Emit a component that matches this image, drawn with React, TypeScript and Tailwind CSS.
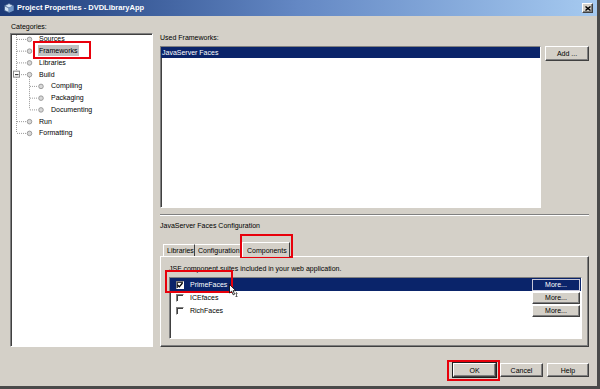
import type { ReactNode } from "react";

const raised =
  "border border-t-white border-l-white border-r-[#404040] border-b-[#404040] shadow-[inset_-1px_-1px_0_#808080]";
const sunken =
  "border border-t-[#808080] border-l-[#808080] border-r-white border-b-white shadow-[inset_1px_1px_0_#404040]";

function Button({ children, className = "" }: { children: ReactNode; className?: string }) {
  return (
    <div className={`flex h-[14px] items-center justify-center bg-[#d4d0c8] ${raised} ${className}`}>
      {children}
    </div>
  );
}

function Mark({ className }: { className: string }) {
  return <div className={`pointer-events-none absolute border-2 border-[#e8000b] ${className}`} />;
}

const tree = [
  { label: "Sources", sub: false },
  { label: "Frameworks", sub: false, active: true },
  { label: "Libraries", sub: false },
  { label: "Build", sub: false },
  { label: "Compiling", sub: true },
  { label: "Packaging", sub: true },
  { label: "Documenting", sub: true },
  { label: "Run", sub: false },
  { label: "Formatting", sub: false },
];

const ROW = 11.75;
const cy = (i: number) => 4.9 + i * ROW;

function TreeLines() {
  return (
    <svg className="absolute left-0 top-0" width="40" height="110" viewBox="0 0 40 110">
      <g stroke="#9a9a9a" strokeWidth="1" strokeDasharray="1 1" fill="none">
        <line x1="5.5" y1="1" x2="5.5" y2={cy(8)} />
        {[0, 1, 2, 3, 7, 8].map((i) => (
          <line key={i} x1="6" y1={cy(i) + 0.5} x2="15" y2={cy(i) + 0.5} />
        ))}
        <line x1="18.5" y1={cy(3) + 3} x2="18.5" y2={cy(6)} />
        {[4, 5, 6].map((i) => (
          <line key={i} x1="19" y1={cy(i) + 0.5} x2="27" y2={cy(i) + 0.5} />
        ))}
      </g>
      <rect x="2.5" y={cy(3) - 3} width="6" height="6" fill="#fff" stroke="#8a8a8a" />
      <line x1="4" y1={cy(3) + 0.5} x2="7.5" y2={cy(3) + 0.5} stroke="#202020" />
      {tree.map((t, i) => (
        <circle
          key={t.label}
          cx={t.sub ? 30 : 18.5}
          cy={cy(i) + 0.5}
          r="2.3"
          fill="#d8d8d8"
          stroke="#8c8c8c"
          strokeWidth="0.8"
        />
      ))}
    </svg>
  );
}

function Check({ checked }: { checked?: boolean }) {
  return (
    <div className={`flex h-[8px] w-[8px] items-center justify-center bg-white ${sunken}`}>
      {checked && (
        <svg width="6" height="6" viewBox="0 0 6 6">
          <path d="M0.5 3 L2.3 4.8 L5.5 1" stroke="#000" strokeWidth="1.3" fill="none" />
        </svg>
      )}
    </div>
  );
}

const suites = [
  { name: "PrimeFaces", on: true },
  { name: "ICEfaces", on: false },
  { name: "RichFaces", on: false },
];

export default function App() {
  return (
    <div className="relative flex h-[389px] w-[600px] flex-col border-b-[3px] border-r-[3px] border-[#4a4a4a] bg-[#d4d0c8] font-['Liberation_Sans',Arial,sans-serif] text-[7px] leading-none text-black">
      {/* title bar */}
      <div className="flex h-[16px] shrink-0 items-center bg-linear-to-r from-[#1c3a78] via-[#6488c4] to-[#a6caf0] pl-[4px] pr-[3px]">
        <svg width="10" height="10" viewBox="0 0 10 10">
          <path d="M5 0.5 L9.5 2.8 L9.5 7.5 L5 9.5 L0.5 7.5 L0.5 2.8 Z" fill="#cfe0f5" stroke="#3b5a8a" strokeWidth="0.8" />
          <path d="M0.5 2.8 L5 5 L9.5 2.8 M5 5 L5 9.5" stroke="#3b5a8a" strokeWidth="0.8" fill="none" />
          <path d="M5 5 L9.5 2.8 L9.5 7.5 L5 9.5 Z" fill="#6f95c8" />
        </svg>
        <span className="ml-[3px] text-[7.5px] font-bold text-white">Project Properties - DVDLibraryApp</span>
        <div className={`ml-auto mr-[1px] flex h-[10px] w-[11px] items-center justify-center bg-[#d4d0c8] ${raised}`}>
          <svg width="6" height="5" viewBox="0 0 6 5">
            <path d="M0.5 0.5 L5.5 4.5 M5.5 0.5 L0.5 4.5" stroke="#000" strokeWidth="1.4" />
          </svg>
        </div>
      </div>

      {/* body */}
      <div className="flex pl-[10px] pr-[8px]">
        {/* categories */}
        <div className="flex w-[143px] flex-col pt-[5px]">
          <div className="flex h-[10px] items-center pl-[1px]">Categories:</div>
          <div className={`relative mt-[2px] h-[314px] bg-white ${sunken}`}>
            <TreeLines />
            <div className="-mt-[1px] flex flex-col">
              {tree.map((t) => (
                <div
                  key={t.label}
                  className={`flex h-[11.75px] items-center ${t.sub ? "pl-[40px]" : "pl-[28px]"}`}
                >
                  <span className={t.active ? "-ml-[1px] bg-[#c0c0c0] px-[1px] py-[2px]" : ""}>{t.label}</span>
                </div>
              ))}
            </div>
          </div>
        </div>

        {/* right side */}
        <div className="ml-[7px] flex flex-1 flex-col">
          <div className="mt-[16px] flex h-[10px] items-center">Used Frameworks:</div>
          <div className="mt-[4px] flex h-[162px] gap-[4px]">
            <div className={`flex-1 bg-white ${sunken}`}>
              <div className="flex h-[11px] items-center bg-[#0a246a] pl-[1px] text-white">JavaServer Faces</div>
            </div>
            <Button className="h-[15px] w-[44px]">Add ...</Button>
          </div>

          <div className="mt-[6px] border-b border-t border-b-white border-t-[#808080]" />
          <div className="mt-[4px] flex h-[10px] items-center">JavaServer Faces Configuration</div>

          {/* tabs */}
          <div className="mt-[12px] flex h-[14px] items-end pl-[3px]">
            <div className="flex h-[12px] w-[32px] items-center border-l border-r border-t border-l-white border-r-[#404040] border-t-white pl-[3px]">
              Libraries
            </div>
            <div className="flex h-[12px] w-[49px] items-center overflow-hidden whitespace-nowrap border-r border-t border-r-[#404040] border-t-white pl-[3px]">
              Configuration
            </div>
            <div className="relative z-10 -mb-[1px] -ml-[2px] flex h-[15px] w-[48px] items-center border-l border-r border-t border-l-white border-r-[#404040] border-t-white bg-[#d4d0c8] pl-[4px]">
              Components
            </div>
          </div>

          {/* tab panel */}
          <div className="flex h-[91px] flex-col border border-b-[#404040] border-l-white border-r-[#404040] border-t-white pl-[8px] pr-[6px] shadow-[inset_-1px_-1px_0_#808080]">
            <div className="mt-[6px] flex h-[10px] items-center">JSF component suites included in your web application.</div>
            <div className={`mt-[4px] h-[62px] bg-white ${sunken}`}>
              {suites.map((s) => (
                <div
                  key={s.name}
                  className={`flex h-[13px] items-center pl-[6px] ${s.on ? "bg-[#0a246a] text-white" : ""}`}
                >
                  <Check checked={s.on} />
                  <span className="ml-[6px]">{s.name}</span>
                  <div
                    className={`ml-auto mr-[1px] flex h-[12px] w-[48px] items-center justify-center ${
                      s.on
                        ? "border border-[#c8c8d8] bg-[#0a246a] text-white"
                        : `bg-[#d4d0c8] ${raised}`
                    }`}
                  >
                    More...
                  </div>
                </div>
              ))}
            </div>
          </div>
        </div>
      </div>

      {/* footer buttons */}
      <div className="mt-[16px] flex justify-end gap-[4px] pr-[8px]">
        <Button className="w-[43px] outline outline-1 outline-[#202020]">OK</Button>
        <Button className="w-[43px]">Cancel</Button>
        <Button className="w-[42px]">Help</Button>
      </div>

      {/* annotations */}
      <Mark className="left-[33px] top-[41px] h-[18px] w-[58px]" />
      <Mark className="left-[240px] top-[234px] h-[24px] w-[53px]" />
      <Mark className="left-[165px] top-[270px] h-[23px] w-[68px]" />
      <Mark className="left-[447px] top-[360px] h-[21px] w-[53px]" />

      {/* mouse pointer */}
      <svg className="absolute left-[229px] top-[284px]" width="9" height="13" viewBox="0 0 9 13">
        <path d="M0.5 0.5 L0.5 9 L2.6 7.2 L4.2 10.8 L5.6 10.2 L4.1 6.7 L6.8 6.7 Z" fill="#fff" stroke="#000" strokeWidth="0.8" />
        <path d="M7.5 9 L7.5 12.5 M6.5 9.5 L7.5 8.5 L8.5 9.5 M6.5 12 L7.5 13 L8.5 12" stroke="#000" strokeWidth="0.6" fill="none" />
      </svg>
    </div>
  );
}
